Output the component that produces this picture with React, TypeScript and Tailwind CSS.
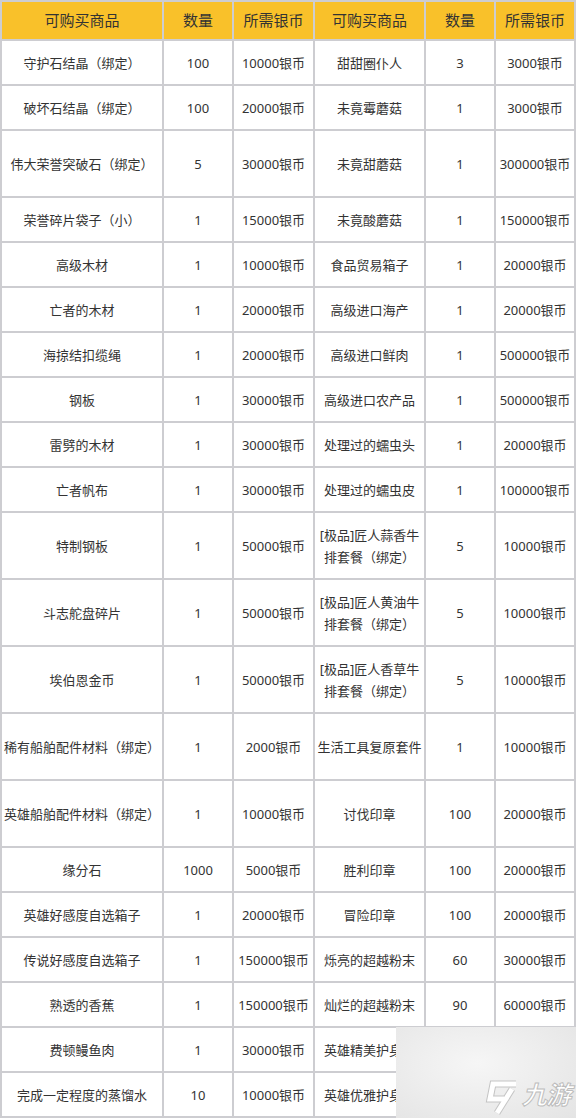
const rows: [string, string, string, string, string, string, boolean][] = [
  ["守护石结晶（绑定）", "100", "10000银币", "甜甜圈仆人", "3", "3000银币", false],
  ["破坏石结晶（绑定）", "100", "20000银币", "未竟霉蘑菇", "1", "3000银币", false],
  ["伟大荣誉突破石（绑定）", "5", "30000银币", "未竟甜蘑菇", "1", "300000银币", true],
  ["荣誉碎片袋子（小）", "1", "15000银币", "未竟酸蘑菇", "1", "150000银币", false],
  ["高级木材", "1", "10000银币", "食品贸易箱子", "1", "20000银币", false],
  ["亡者的木材", "1", "20000银币", "高级进口海产", "1", "20000银币", false],
  ["海掠结扣缆绳", "1", "20000银币", "高级进口鲜肉", "1", "500000银币", false],
  ["钢板", "1", "30000银币", "高级进口农产品", "1", "500000银币", false],
  ["雷劈的木材", "1", "30000银币", "处理过的蠕虫头", "1", "20000银币", false],
  ["亡者帆布", "1", "30000银币", "处理过的蠕虫皮", "1", "100000银币", false],
  ["特制钢板", "1", "50000银币", "[极品]匠人蒜香牛\n排套餐（绑定）", "5", "10000银币", true],
  ["斗志舵盘碎片", "1", "50000银币", "[极品]匠人黄油牛\n排套餐（绑定）", "5", "10000银币", true],
  ["埃伯恩金币", "1", "50000银币", "[极品]匠人香草牛\n排套餐（绑定）", "5", "10000银币", true],
  ["稀有船舶配件材料（绑定）", "1", "2000银币", "生活工具复原套件", "1", "10000银币", true],
  ["英雄船舶配件材料（绑定）", "1", "10000银币", "讨伐印章", "100", "20000银币", true],
  ["缘分石", "1000", "5000银币", "胜利印章", "100", "20000银币", false],
  ["英雄好感度自选箱子", "1", "20000银币", "冒险印章", "100", "20000银币", false],
  ["传说好感度自选箱子", "1", "150000银币", "烁亮的超越粉末", "60", "30000银币", false],
  ["熟透的香蕉", "1", "150000银币", "灿烂的超越粉末", "90", "60000银币", false],
  // last two rows: quantity / price hidden under the watermark in the source
  ["费顿鳗鱼肉", "1", "30000银币", "英雄精美护身符", "", "", false],
  ["完成一定程度的蒸馏水", "10", "10000银币", "英雄优雅护身符", "", "", false],
];

const headers = ["可购买商品", "数量", "所需银币", "可购买商品", "数量", "所需银币"];

export default function App() {
  return (
    <div className="relative w-[576px] h-[1118px] overflow-hidden bg-white font-['Noto_Sans','Noto_Sans_CJK_SC',sans-serif] text-[#333]">
      <div className="grid grid-cols-[160px_68px_79px_109px_68px_78px] gap-[2px] bg-[#cdcdd1] p-[2px]">
        {headers.map((h, i) => (
          <div
            key={"h" + i}
            className="flex h-[37px] items-center justify-center bg-[#f9c12a] text-[15px]"
          >
            {h}
          </div>
        ))}
        {rows.map((r, ri) =>
          r.slice(0, 6).map((cell, ci) => (
            <div
              key={ri + "-" + ci}
              className={`flex items-center justify-center whitespace-pre bg-white text-center text-[13px] leading-[22px] ${
                r[6] ? "h-[65px]" : "h-[43px]"
              }`}
            >
              {cell as string}
            </div>
          )),
        )}
      </div>

      {/* watermark */}
      <div className="absolute left-[396px] top-[1027px] h-[91px] w-[180px] bg-[radial-gradient(ellipse_at_45%_40%,#f6f6f6_0%,#ebebeb_60%,#e4e4e4_100%)]">
        <svg className="absolute left-[89px] top-[52px]" width="34" height="36" viewBox="0 0 34 36">
          <g fill="none" strokeLinecap="butt" strokeLinejoin="miter">
            <path d="M31 5 L8 5 L5 20 L19 20" stroke="#c4c4c4" strokeWidth="7" />
            <path d="M27 10 L12 34" stroke="#c4c4c4" strokeWidth="7" />
            <path d="M31 5 L8 5 L5 20 L19 20" stroke="#ffffff" strokeWidth="5" />
            <path d="M27 10 L12 34" stroke="#ffffff" strokeWidth="5" />
          </g>
        </svg>
        <div className="absolute left-[126px] top-[55px] text-[25px] font-bold italic leading-none tracking-[-1px] text-white [-webkit-text-stroke:1px_#bdbdbd]">
          九游
        </div>
      </div>
    </div>
  );
}
